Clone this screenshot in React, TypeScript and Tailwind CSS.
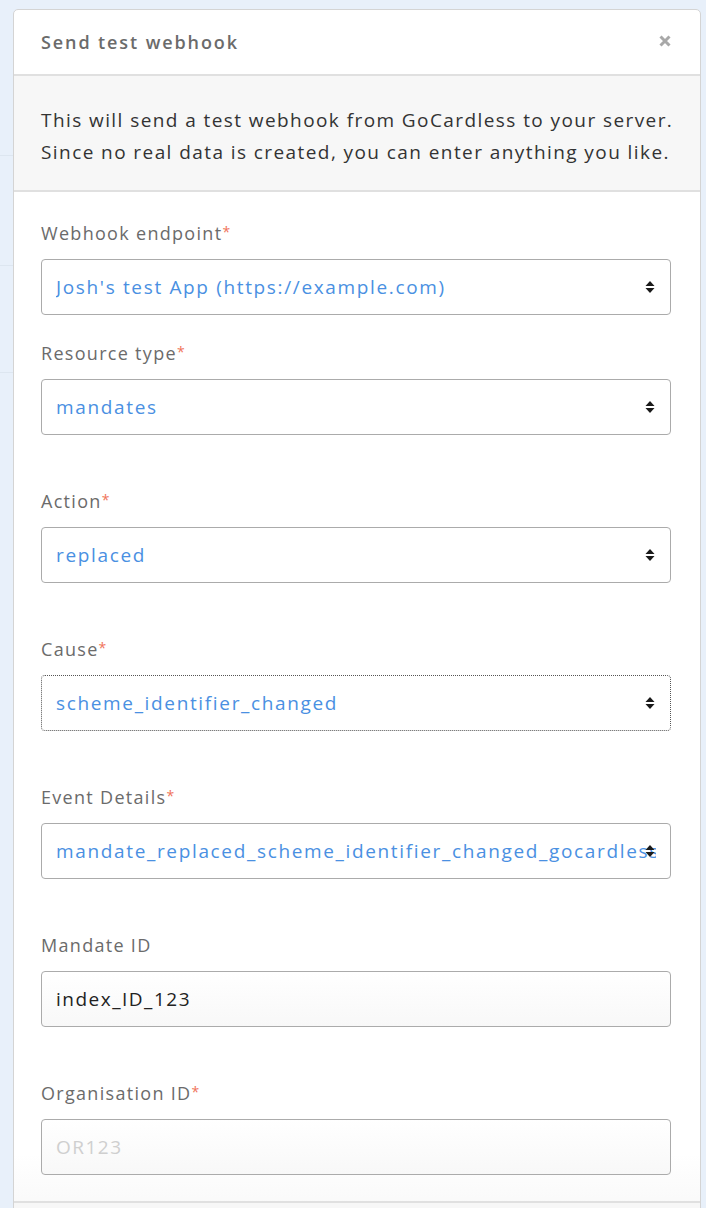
import React from "react";

const font = { fontFamily: '"Open Sans", "Noto Sans", sans-serif' };

function Arrows() {
  return (
    <svg width="10" height="14" viewBox="0 0 10 14" className="absolute right-[15px] top-1/2 -translate-y-1/2">
      <path d="M5 1 L9.5 6 L0.5 6 Z" fill="#1a1a1a" />
      <path d="M0.5 8 L9.5 8 L5 13 Z" fill="#1a1a1a" />
    </svg>
  );
}

function Label({ text, required }: { text: string; required?: boolean }) {
  return (
    <div className="text-[18px] leading-[24px] tracking-[1.3px] text-[#6b6b6b] mb-[14px]">
      {text}
      {required && <span className="text-[14px] align-top relative -top-[1px] text-[#f0735a]">*</span>}
    </div>
  );
}

function Select({ value, dashed }: { value: string; dashed?: boolean }) {
  return (
    <div
      className={
        "relative h-[56px] rounded-[4px] bg-white flex items-center pl-[14px] pr-[14px] overflow-hidden " +
        (dashed ? "border border-dotted border-[#555]" : "border-[1.5px] border-[#ababab]")
      }
    >
      <span className="text-[19px] tracking-[1.65px] text-[#4a90e2] whitespace-nowrap overflow-hidden">{value}</span>
      <Arrows />
    </div>
  );
}

function Input({ value, placeholder }: { value?: string; placeholder?: string }) {
  return (
    <div className="h-[56px] rounded-[4px] border-[1.5px] border-[#ababab] bg-gradient-to-b from-white to-[#f8f8f8] flex items-center pl-[14px]">
      {value ? (
        <span className="text-[19px] tracking-[1.5px] text-[#222]">{value}</span>
      ) : (
        <span className="text-[19px] tracking-[1.5px] text-[#cfcfcf]">{placeholder}</span>
      )}
    </div>
  );
}

export default function App() {
  return (
    <div style={font} className="w-[706px] h-[1208px] bg-[#e8f0fa] overflow-hidden relative">
      <div className="absolute left-0 top-[155px] w-[13px] h-px bg-[#dde6f0]" />
      <div className="absolute left-0 top-[265px] w-[13px] h-px bg-[#dde6f0]" />
      <div className="absolute left-0 top-[372px] w-[13px] h-px bg-[#dde6f0]" />
      <div className="pt-[9px] pl-[13px] pr-[5px]">
        <div className="bg-white border border-[#d4d4d4] rounded-t-[5px] h-[1250px]">
          <div className="h-[66px] flex items-center justify-between pl-[27px] pr-[29px] border-b-2 border-[#e0e0e0]">
            <div className="text-[18px] font-semibold tracking-[1.9px] text-[#6b6b6b]">Send test webhook</div>
            <svg width="12" height="12" viewBox="0 0 12 12" className="-mt-[2px]">
              <path d="M1.5 1.5 L10.5 10.5 M10.5 1.5 L1.5 10.5" stroke="#a8a8a8" strokeWidth="3" />
            </svg>
          </div>
          <div className="bg-[#f7f7f7] border-b-2 border-[#e0e0e0] h-[116px] pl-[27px] pr-[10px] pt-[28px] text-[19px] leading-[32px] tracking-[1.42px] text-[#333] whitespace-nowrap">
            This will send a test webhook from GoCardless to your server.
            <br />
            Since no real data is created, you can enter anything you like.
          </div>
          <div className="pl-[27px] pr-[29px] pt-[29px] bg-gradient-to-b from-white from-90% to-[#f3f3f3]">
            <Label text="Webhook endpoint" required />
            <Select value="Josh's test App (https://example.com)" />
            <div className="h-[26px]" />
            <Label text="Resource type" required />
            <Select value="mandates" />
            <div className="h-[54px]" />
            <Label text="Action" required />
            <Select value="replaced" />
            <div className="h-[54px]" />
            <Label text="Cause" required />
            <Select value="scheme_identifier_changed" dashed />
            <div className="h-[54px]" />
            <Label text="Event Details" required />
            <Select value="mandate_replaced_scheme_identifier_changed_gocardless" />
            <div className="h-[54px]" />
            <Label text="Mandate ID" />
            <Input value="index_ID_123" />
            <div className="h-[54px]" />
            <Label text="Organisation ID" required />
            <Input placeholder="OR123" />
            <div className="h-[26px]" />
            <div className="border-t-2 border-[#e0e0e0] -ml-[27px] -mr-[29px] h-[60px] bg-[#f7f7f7]" />
          </div>
        </div>
      </div>
    </div>
  );
}
